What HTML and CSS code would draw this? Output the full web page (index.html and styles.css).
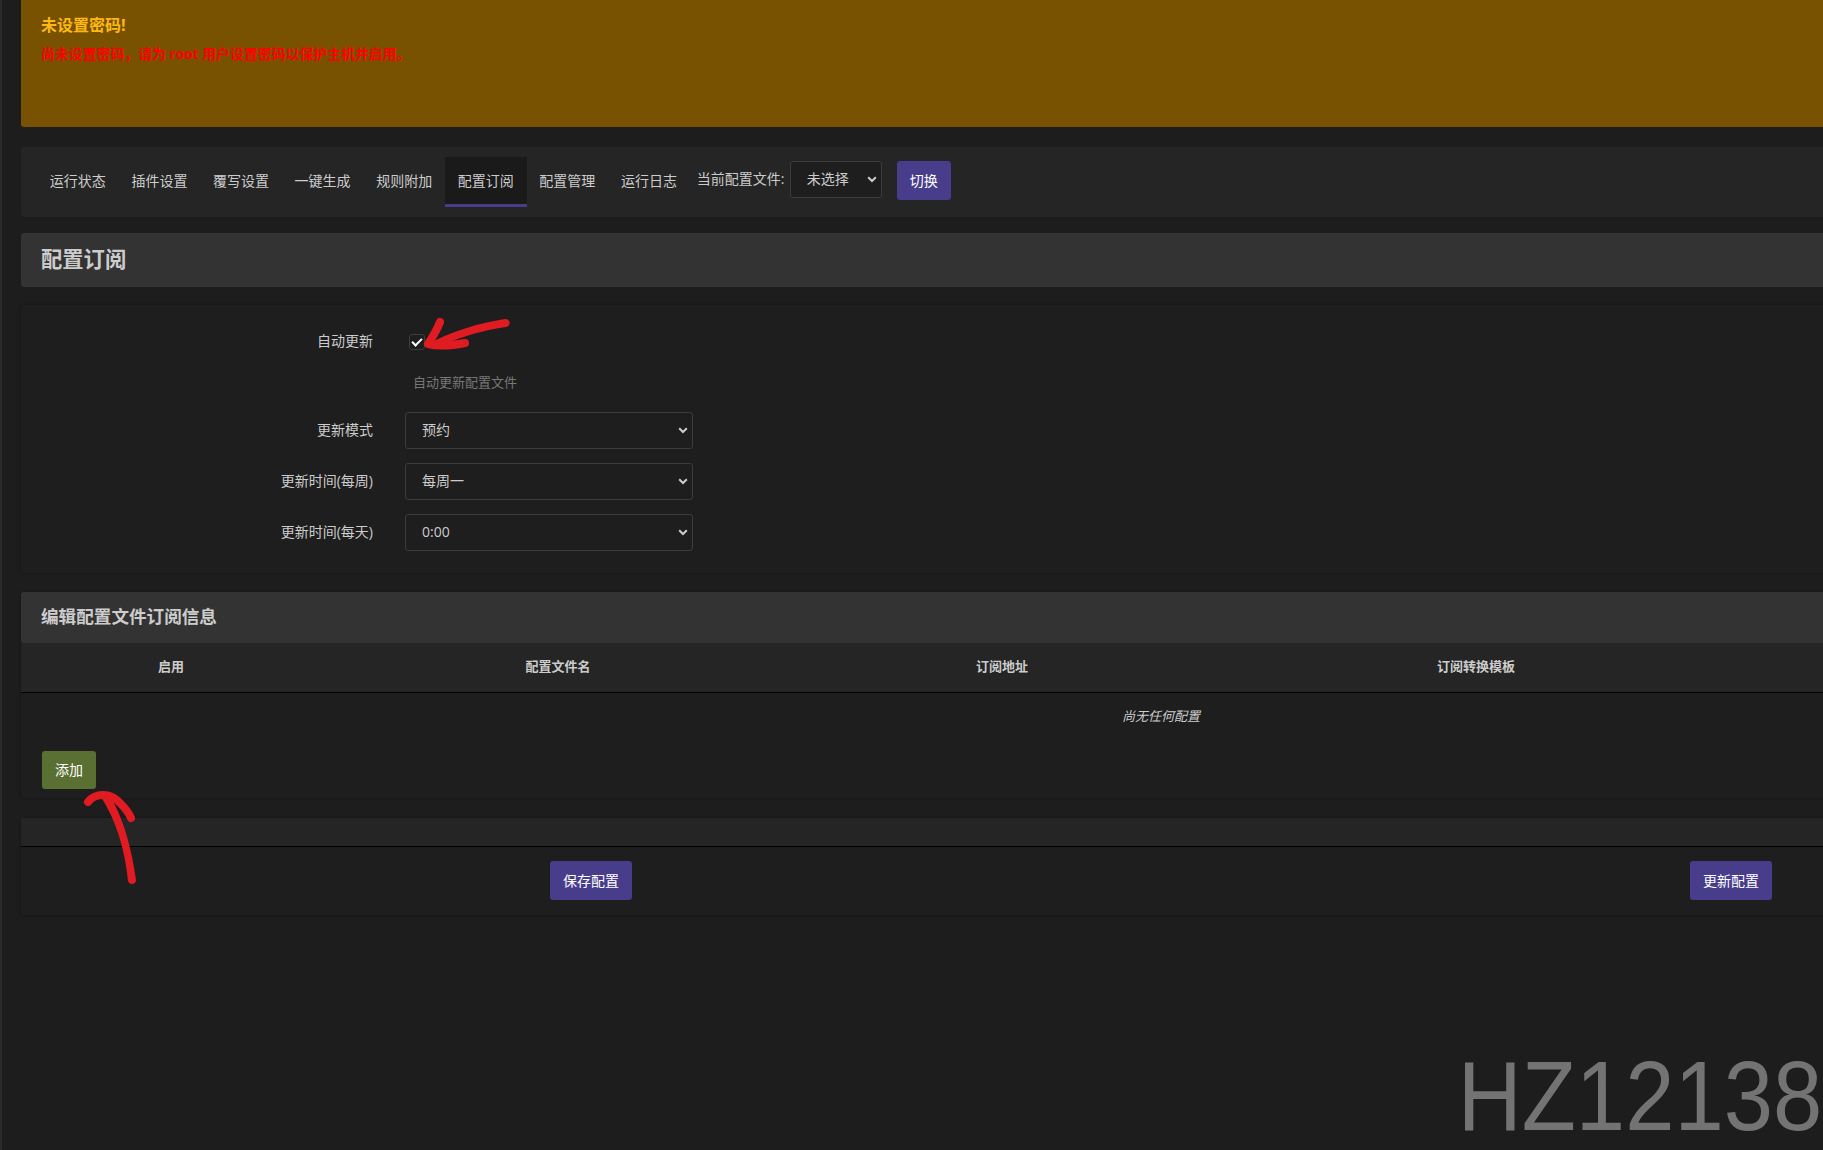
FILE: index.html
```html
<!DOCTYPE html>
<html lang="zh-CN">
<head>
  <meta charset="UTF-8" />
  <meta name="viewport" content="width=device-width, initial-scale=1.0" />
  <title>配置订阅</title>
  <link rel="stylesheet" href="styles.css">
</head>
<body>
  <div id="maincontent">
    <!-- Password warning -->
    <div class="alert">
      <h4>未设置密码!</h4>
      <p>尚未设置密码，请为 root 用户设置密码以保护主机并启用。</p>
    </div>

    <!-- Tabs -->
    <div class="tab-bar">
      <ul class="tabs">
        <li><a href="#">运行状态</a></li>
        <li><a href="#">插件设置</a></li>
        <li><a href="#">覆写设置</a></li>
        <li><a href="#">一键生成</a></li>
        <li><a href="#">规则附加</a></li>
        <li class="active"><a href="#">配置订阅</a></li>
        <li><a href="#">配置管理</a></li>
        <li><a href="#">运行日志</a></li>
      </ul>
      <label class="config-label">当前配置文件:</label>
      <select class="config-select">
        <option>未选择</option>
      </select>
      <button class="btn btn-primary btn-switch">切换</button>
    </div>

    <h2 class="page-title">配置订阅</h2>

    <!-- Update settings -->
    <div class="card form-card">
      <div class="form-row check-row">
        <label>自动更新</label>
        <div class="field">
          <input type="checkbox" class="check" checked>
        </div>
      </div>
      <div class="form-row desc-row">
        <span></span>
        <div class="field-desc">自动更新配置文件</div>
      </div>
      <div class="form-row">
        <label>更新模式</label>
        <select class="field-select"><option>预约</option></select>
      </div>
      <div class="form-row">
        <label>更新时间(每周)</label>
        <select class="field-select"><option>每周一</option></select>
      </div>
      <div class="form-row">
        <label>更新时间(每天)</label>
        <select class="field-select"><option>0:00</option></select>
      </div>
    </div>

    <!-- Subscription table -->
    <div class="card table-card">
      <h3 class="section-title">编辑配置文件订阅信息</h3>
      <table class="sub-table">
        <colgroup>
          <col class="col-enable">
          <col class="col-name">
          <col class="col-url">
          <col class="col-template">
          <col>
        </colgroup>
        <thead>
          <tr>
            <th>启用</th>
            <th>配置文件名</th>
            <th>订阅地址</th>
            <th>订阅转换模板</th>
            <th></th>
          </tr>
        </thead>
        <tbody>
          <tr>
            <td colspan="5" class="empty">尚无任何配置</td>
          </tr>
        </tbody>
      </table>
      <button class="btn btn-add">添加</button>
    </div>

    <!-- Page actions -->
    <div class="card actions-card">
      <div class="actions-band"></div>
      <div class="actions">
        <button class="btn btn-primary">保存配置</button>
        <button class="btn btn-primary">更新配置</button>
      </div>
    </div>
  </div>

  <!-- Red marker notes drawn on the screenshot -->
  <svg class="marks" width="1823" height="1150" viewBox="0 0 1823 1150">
    <path class="mark-fill" d="M505 319 C511 319 511 326 506 327 C485 330 462 336 444 345 L425 346 C450 331 480 323 505 319 Z" />
    <path class="mark" d="M440 322 C437 330 432 338 428 344 C440 347 455 345 465 343" />
    <path class="mark-fill" d="M128 881 C125 850 116 820 101 797 L108 793 C123 815 132 850 136 880 C136 885 129 885 128 881 Z" />
    <path class="mark" d="M88 802 C95 793 110 792 120 803 C125 808 129 813 131 818" />
  </svg>

  <div class="watermark">HZ12138</div>
</body>
</html>
```

FILE: styles.css
```css
:root {
  --background: #1d1d1d;
  --card: #1e1e1e;
  --panel: #252525;
  --panel-light: #333333;
  --primary: #483d8b;
  --olive: #5a7033;
  --text-color: #cccccc;
  --field-border: #3c3c3c;
}

html, body {
  height: 100%;
}
body {
  margin: 0;
  width: 1823px;
  height: 1150px;
  overflow: hidden;
  position: relative;
  box-sizing: border-box;
  border-left: 2px solid #2b2b2b;
  background-color: var(--background);
  color: var(--text-color);
  font-family: "Open Sans", "Noto Sans CJK SC", sans-serif;
  font-size: 14px;
}

/* content runs wider than the window, same as the source page */
#maincontent {
  width: 2280px;
  margin-left: 19px;
}

/* Warning banner */
.alert {
  height: 127px;
  box-sizing: border-box;
  padding: 14px 20px 0;
  background-color: #785200;
  border-radius: 0 0 3px 3px;
}
.alert h4 {
  margin: 0;
  color: #fdb913;
  font-size: 16px;
  line-height: 22px;
  font-weight: 700;
}
.alert p {
  margin: 7px 0 0;
  color: #ff0000;
  font-size: 14px;
  font-weight: 700;
  line-height: 22px;
  letter-spacing: -0.12px;
}

/* Tabs */
.tab-bar {
  display: flex;
  align-items: flex-start;
  height: 70px;
  box-sizing: border-box;
  margin-top: 20px;
  padding: 10px 0 0 16px;
  background-color: var(--panel);
  border-radius: 3px;
}
.tabs {
  list-style: none;
  display: flex;
  margin: 0;
  padding: 0;
}
.tabs li {
  height: 50px;
  box-sizing: border-box;
  border-bottom: 3px solid transparent;
}
.tabs li a {
  display: block;
  padding: 0 12.8px;
  color: var(--text-color);
  line-height: 47px;
  text-decoration: none;
}
.tabs li.active {
  background-color: #1a1a1a;
  border-bottom-color: var(--primary);
}
.config-label {
  margin-left: 7px;
  width: 93px;
  line-height: 35px;
  margin-top: 4px;
  white-space: nowrap;
}
.config-select {
  width: 92px;
  height: 37px;
  margin-top: 4px;
  padding-left: 16px;
}
.btn-switch {
  margin-left: 15px;
  margin-top: 4px;
}

/* chevron is drawn so it keeps the heavier look of the original */
select {
  appearance: none;
  box-sizing: border-box;
  padding-bottom: 2px;
  background-color: #1e1e1e;
  background-image: url("data:image/svg+xml,%3Csvg xmlns='http://www.w3.org/2000/svg' width='10' height='7'%3E%3Cpath d='M1.2 1.2 5 5 8.8 1.2' fill='none' stroke='%23cccccc' stroke-width='2'/%3E%3C/svg%3E");
  background-repeat: no-repeat;
  background-position: right 4px center;
  border: 1px solid var(--field-border);
  border-radius: 3px;
  color: var(--text-color);
  font-family: inherit;
  font-size: 14px;
}

.btn {
  height: 39px;
  padding: 0 13px 2px;
  border: none;
  border-radius: 3px;
  color: #ffffff;
  font-family: inherit;
  font-size: 14px;
  cursor: pointer;
}
.btn-primary {
  background-color: var(--primary);
}

/* Headings */
.page-title {
  height: 54px;
  margin: 16px 0 0;
  padding-left: 20px;
  background-color: var(--panel-light);
  border-radius: 3px;
  color: var(--text-color);
  font-size: 21.3px;
  font-weight: 700;
  line-height: 52px;
}
.section-title {
  height: 51px;
  margin: 0;
  padding-left: 20px;
  background-color: var(--panel-light);
  border-radius: 3px;
  color: var(--text-color);
  font-size: 17.6px;
  font-weight: 700;
  line-height: 49px;
}

.card {
  background-color: var(--card);
  border-radius: 3px;
  box-shadow: 0 0 3px rgba(0, 0, 0, 0.3);
}

/* Form */
.form-card {
  margin-top: 18px;
  padding: 20px 0 22px;
}
.form-row {
  display: grid;
  grid-template-columns: 352px 288px;
  column-gap: 32px;
  align-items: center;
  margin-bottom: 14px;
}
.form-row:last-child {
  margin-bottom: 0;
}
.form-row label {
  padding-bottom: 3px;
  text-align: right;
}
.check-row {
  height: 32px;
  margin-bottom: 15px;
}
.desc-row {
  height: 20px;
  margin-bottom: 20px;
}
.field {
  display: flex;
  align-items: center;
}
.check {
  appearance: none;
  position: relative;
  width: 16px;
  height: 16px;
  margin: 1px 0 0 4px;
  background-color: #1e1e1e;
  border: 1px solid var(--field-border);
  border-radius: 3px;
}
.check:checked::after {
  content: "";
  position: absolute;
  left: 4px;
  top: 1px;
  width: 4px;
  height: 8px;
  border: solid #ffffff;
  border-width: 0 2.5px 2.5px 0;
  transform: rotate(45deg);
}
.field-desc {
  padding: 0 0 3px 8px;
  color: #777777;
  font-size: 13px;
}
.field-select {
  width: 288px;
  height: 37px;
  padding-left: 16px;
}

/* Table */
.table-card {
  margin-top: 19px;
  padding-bottom: 9px;
}
.sub-table {
  width: 100%;
  table-layout: fixed;
  border-collapse: collapse;
}
.col-enable { width: 300px; }
.col-name { width: 474px; }
.col-url { width: 414px; }
.col-template { width: 534px; }
.sub-table th {
  height: 49px;
  padding: 0 0 3px;
  box-sizing: border-box;
  background-color: var(--panel);
  border-bottom: 1px solid #000000;
  font-size: 13px;
  font-weight: 700;
}
.sub-table td.empty {
  height: 48px;
  padding: 0 0 1px;
  box-sizing: border-box;
  text-align: center;
  font-size: 13px;
  font-style: italic;
}
.btn-add {
  display: block;
  height: 38px;
  margin: 11px 0 0 21px;
  padding: 0 13px 2px;
  background-color: var(--olive);
}

/* Save / update row */
.actions-card {
  margin-top: 20px;
}
.actions-band {
  height: 28px;
  background-color: var(--panel);
  border-bottom: 1px solid #000000;
}
.actions {
  display: flex;
  gap: 1058px;
  padding: 14px 0 15px 529px;
}

/* Overlays */
.marks {
  position: absolute;
  left: -2px;
  top: 0;
  pointer-events: none;
}
.mark {
  fill: none;
  stroke: #e01b22;
  stroke-width: 8;
  stroke-linecap: round;
  stroke-linejoin: round;
}
.mark-fill {
  fill: #e01b22;
}
.watermark {
  position: absolute;
  right: 1px;
  top: 1041px;
  color: #737373;
  font-family: "Liberation Sans", Arial, sans-serif;
  font-size: 99px;
  line-height: 110px;
  transform: scaleX(0.895);
  transform-origin: right center;
}
```
